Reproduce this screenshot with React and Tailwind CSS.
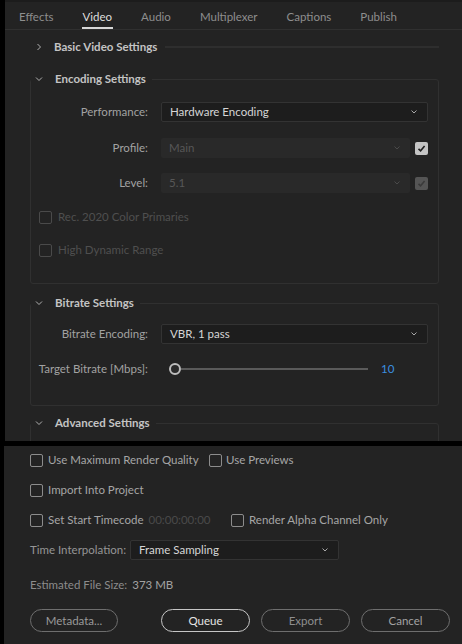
import React from "react";

const font = { fontFamily: "Lato, 'Noto Sans', sans-serif" };

function Chevron({ down }) {
  return (
    <svg width="8" height="8" viewBox="0 0 8 8" className="shrink-0">
      {down ? (
        <path d="M1 2.5 L4 5.5 L7 2.5" fill="none" stroke="#b0b0b0" strokeWidth="1" />
      ) : (
        <path d="M2.5 1 L5.5 4 L2.5 7" fill="none" stroke="#b0b0b0" strokeWidth="1" />
      )}
    </svg>
  );
}

function SmallChevron({ color = "#a0a0a0" }) {
  return (
    <svg width="8" height="6" viewBox="0 0 8 6" className="shrink-0">
      <path d="M1.5 1.5 L4 4 L6.5 1.5" fill="none" stroke={color} strokeWidth="1" />
    </svg>
  );
}

function Check({ checked, disabled }) {
  if (checked) {
    return (
      <div
        className={`w-[13px] h-[13px] rounded-[2px] flex items-center justify-center shrink-0 ${
          disabled ? "bg-[#555555]" : "bg-[#c4c4c4]"
        }`}
      >
        <svg width="9" height="9" viewBox="0 0 9 9">
          <path
            d="M1.5 4.8 L3.6 6.8 L7.6 2"
            fill="none"
            stroke={disabled ? "#3a3a3a" : "#1e1e1e"}
            strokeWidth="1.6"
          />
        </svg>
      </div>
    );
  }
  return (
    <div
      className={`w-[13px] h-[13px] rounded-[2px] border-[1.5px] shrink-0 ${
        disabled ? "border-[#4a4a4a]" : "border-[#8c8c8c]"
      }`}
    ></div>
  );
}

function Dropdown({ value, disabled, className }) {
  return (
    <div
      className={`h-[20px] rounded-[2px] flex items-center justify-between pl-[8px] pr-[9px] ${
        disabled
          ? "bg-[#292929] text-[#575757]"
          : "bg-[#1d1d1d] border border-[#333333] text-[#d6d6d6]"
      } ${className}`}
    >
      <span>{value}</span>
      <SmallChevron color={disabled ? "#4a4a4a" : "#a8a8a8"} />
    </div>
  );
}

function Group({ title, children, className }) {
  return (
    <fieldset className={`border border-[#303030] rounded-[3px] ${className}`}>
      <legend className="flex items-center pl-[4px] pr-[6px] h-[16px] gap-[12px]">
        <Chevron down />
        <span className="font-bold text-[#c4c4c4]">{title}</span>
      </legend>
      {children}
    </fieldset>
  );
}

function Row({ label, children, className }) {
  return (
    <div className={`flex items-center ${className}`}>
      <div className="w-[117px] shrink-0 text-right text-[#a2a2a2] whitespace-nowrap">{label}</div>
      <div className="ml-[13px] flex items-center gap-[5px]">{children}</div>
    </div>
  );
}

const tabs = ["Effects", "Video", "Audio", "Multiplexer", "Captions", "Publish"];

export default function App() {
  return (
    <div className="w-[462px] h-[644px] bg-black flex flex-col text-[11.5px] leading-[16px]" style={font}>
      {/* UPPER PANEL */}
      <div className="h-[441px] pl-[5px] shrink-0">
        <div className="h-full bg-[#232323] overflow-hidden flex flex-col">
          {/* Tabs */}
          <div className="h-[30px] shrink-0 border-t-[2px] border-t-[#1c1c1c] border-b border-b-[#303030] flex items-end pl-[13px] gap-[27px]">
            {tabs.map((t) => (
              <div
                key={t}
                className={`h-[27px] flex flex-col justify-start pt-[7px] ${
                  t === "Video" ? "text-[#dedede]" : "text-[#8e8e8e]"
                }`}
              >
                <span className="px-[1px]">{t}</span>
                {t === "Video" && <div className="mt-[2px] h-[2px] bg-[#d8d8d8]"></div>}
              </div>
            ))}
          </div>

          <div className="pl-[25px] pr-[23px]">
            {/* Basic Video Settings */}
            <div className="mt-[9px] h-[16px] flex items-center pl-[5px]">
              <Chevron />
              <span className="ml-[11px] font-bold text-[#c4c4c4] whitespace-nowrap">Basic Video Settings</span>
              <div className="ml-[8px] flex-1 h-[2px] bg-[#2e2e2e]"></div>
            </div>

            {/* Encoding Settings */}
            <Group title="Encoding Settings" className="mt-[16px] pb-[25px] pr-[10px]">
              <Row label="Performance:" className="mt-[15px]">
                <Dropdown value="Hardware Encoding" className="w-[267px]" />
              </Row>
              <Row label="Profile:" className="mt-[16px]">
                <Dropdown value="Main" disabled className="w-[249px]" />
                <Check checked />
              </Row>
              <Row label="Level:" className="mt-[15px]">
                <Dropdown value="5.1" disabled className="w-[249px]" />
                <Check checked disabled />
              </Row>
              <div className="mt-[16px] h-[16px] flex items-center pl-[8px] gap-[6px] text-[#4f4f4f]">
                <Check disabled />
                <span>Rec. 2020 Color Primaries</span>
              </div>
              <div className="mt-[17px] h-[16px] flex items-center pl-[8px] gap-[6px] text-[#4f4f4f]">
                <Check disabled />
                <span>High Dynamic Range</span>
              </div>
            </Group>

            {/* Bitrate Settings */}
            <Group title="Bitrate Settings" className="mt-[11px] pb-[26px] pr-[10px]">
              <Row label="Bitrate Encoding:" className="mt-[13px]">
                <Dropdown value="VBR, 1 pass" className="w-[267px]" />
              </Row>
              <Row label="Target Bitrate [Mbps]:" className="mt-[15px] h-[20px]">
                <div className="flex items-center pl-[8px]">
                  <div className="w-[12px] h-[12px] rounded-full border-[2px] border-[#bdbdbd] bg-[#2a2a2a]"></div>
                  <div className="w-[187px] h-[2px] bg-[#5a5a5a]"></div>
                  <span className="ml-[13px] text-[#3b8fe0]">10</span>
                </div>
              </Row>
            </Group>

            {/* Advanced Settings */}
            <Group title="Advanced Settings" className="mt-[9px] h-[60px]">
              <div></div>
            </Group>
          </div>
        </div>
      </div>

      {/* separator */}
      <div className="h-[5px] shrink-0"></div>

      {/* LOWER PANEL */}
      <div className="flex-1 ml-[4px] bg-[#232323] pl-[26px] pr-[12px] pt-[4px] text-[#a6a6a6]">
        <div className="h-[20px] flex items-center">
          <div className="w-[179px] flex items-center gap-[5px]">
            <Check />
            <span>Use Maximum Render Quality</span>
          </div>
          <div className="flex items-center gap-[4px]">
            <Check />
            <span>Use Previews</span>
          </div>
        </div>
        <div className="mt-[10px] h-[20px] flex items-center gap-[5px]">
          <Check />
          <span>Import Into Project</span>
        </div>
        <div className="mt-[10px] h-[20px] flex items-center">
          <div className="w-[201px] flex items-center">
            <Check />
            <span className="ml-[5px]">Set Start Timecode</span>
            <span className="ml-[5px] text-[#4a4a4a]">00:00:00:00</span>
          </div>
          <div className="flex items-center gap-[5px]">
            <Check />
            <span>Render Alpha Channel Only</span>
          </div>
        </div>
        <div className="mt-[10px] h-[20px] flex items-center">
          <span className="w-[100px] text-[#959595]">Time Interpolation:</span>
          <Dropdown value="Frame Sampling" className="w-[209px]" />
        </div>
        <div className="mt-[15px] h-[20px] flex items-center text-[#8c8c8c]">
          <span>Estimated File Size:</span>
          <span className="ml-[5px] text-[#a2a2a2]">373 MB</span>
        </div>
        <div className="mt-[14px] flex items-center">
          <button className="w-[88px] h-[23px] rounded-full border border-[#6e6e6e] text-[#9a9a9a]">Metadata...</button>
          <button className="ml-[43px] w-[89px] h-[23px] rounded-full border border-[#c6c6c6] text-[#e4e4e4]">Queue</button>
          <button className="ml-[11px] w-[89px] h-[23px] rounded-full border border-[#6e6e6e] text-[#8e8e8e]">Export</button>
          <button className="ml-[11px] w-[89px] h-[23px] rounded-full border border-[#6e6e6e] text-[#a2a2a2]">Cancel</button>
        </div>
      </div>
    </div>
  );
}
